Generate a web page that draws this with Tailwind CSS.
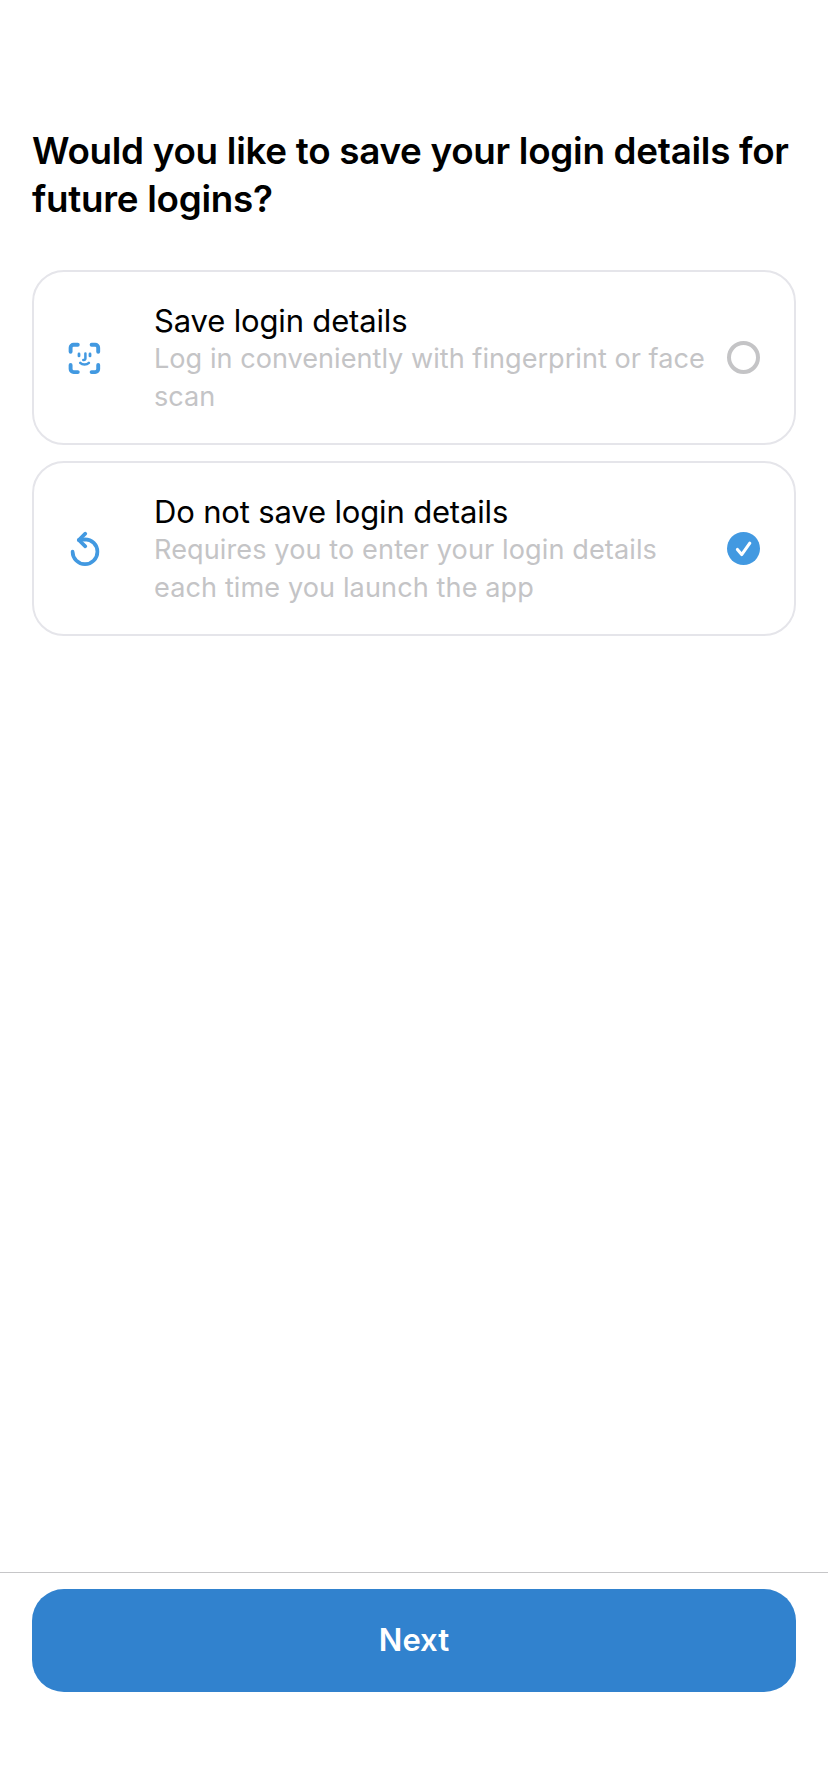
<!DOCTYPE html>
<html lang="en">
<head>
<meta charset="utf-8">
<title>Save login details</title>
<script src="https://cdn.jsdelivr.net/npm/@tailwindcss/browser@4"></script>
</head>
<body class="flex h-[1792px] w-[828px] flex-col overflow-hidden bg-white font-['Inter',sans-serif] text-black">
  <main class="flex-1 px-8 pt-[127px]">
    <h1 class="h-24 text-[36.8px] leading-[48px] font-semibold tracking-[-0.285px] whitespace-nowrap">Would you like to save your login details for<br>future logins?</h1>

    <div class="mt-[47px] flex flex-col gap-4">
      <label class="flex h-[175px] items-center rounded-[32px] border-2 border-[#e5e5ea] pr-[34px] pl-[30px]">
        <svg class="size-10 shrink-0" viewBox="0 0.5 40 40" fill="none" stroke="#4299e1" stroke-linecap="round" stroke-linejoin="round">
          <path stroke-width="3.9" d="M6.6 14.2V10.3a3 3 0 0 1 3-3H13.8M27.6 7.3h3.6a3 3 0 0 1 3 3v3.9M34.2 27.4v4.2a3 3 0 0 1-3 3h-3.6M13.8 34.6H9.6a3 3 0 0 1-3-3v-4.2"/>
          <path stroke-width="2.8" d="M15 16.5v1.9M26 16.5v1.9"/>
          <path stroke-width="2.5" d="M21.4 16v5.1a1.5 1.5 0 0 1-1.5 1.5h-.6M16.2 25.3c2.3 2.3 6.4 2.3 8.7 0"/>
        </svg>
        <div class="ml-[50px] h-[112px] flex-1 whitespace-nowrap">
          <div class="text-[31px] leading-[38px] tracking-[-0.16px]">Save login details</div>
          <div class="text-[27.1px] leading-[38px] tracking-[0.02px] text-[#c4c4c6]">Log in conveniently with fingerprint or face<br>scan</div>
        </div>
        <span class="size-[33px] shrink-0 rounded-full border-4 border-[#c4c4c6]"></span>
      </label>

      <label class="flex h-[175px] items-center rounded-[32px] border-2 border-[#e5e5ea] pr-[34px] pl-[30px]">
        <svg class="size-10 shrink-0" viewBox="0 0.5 40 40" fill="none" stroke="#4299e1" stroke-width="3.7" stroke-linecap="round" stroke-linejoin="round">
          <path d="M8.6 23.2A12.4 12.4 0 1 0 21 10.8L14.8 11.5"/>
          <path d="M21.3 5.2L14.8 11.5L21.3 17.8"/>
        </svg>
        <div class="ml-[50px] h-[112px] flex-1 whitespace-nowrap">
          <div class="text-[31px] leading-[38px] tracking-[-0.16px]">Do not save login details</div>
          <div class="text-[27.1px] leading-[38px] tracking-[0.1px] text-[#c4c4c6]">Requires you to enter your login details<br>each time you launch the app</div>
        </div>
        <svg class="size-[33px] shrink-0" viewBox="0 0 33 33" fill="none">
          <circle cx="16.5" cy="16.5" r="16.5" fill="#4299e1"/>
          <path d="M10.4 17.5l4.3 5.1L22.8 11.2" stroke="#fff" stroke-width="3.1" stroke-linecap="round" stroke-linejoin="round"/>
        </svg>
      </label>
    </div>
  </main>

  <footer class="h-[220px] border-t border-[#c6c6c8] px-8 pt-4">
    <button class="flex h-[103px] w-full items-center justify-center rounded-[32px] bg-[#3182ce] pb-[2px] text-[31px] leading-[38px] font-semibold text-white">Next</button>
  </footer>
</body>
</html>
